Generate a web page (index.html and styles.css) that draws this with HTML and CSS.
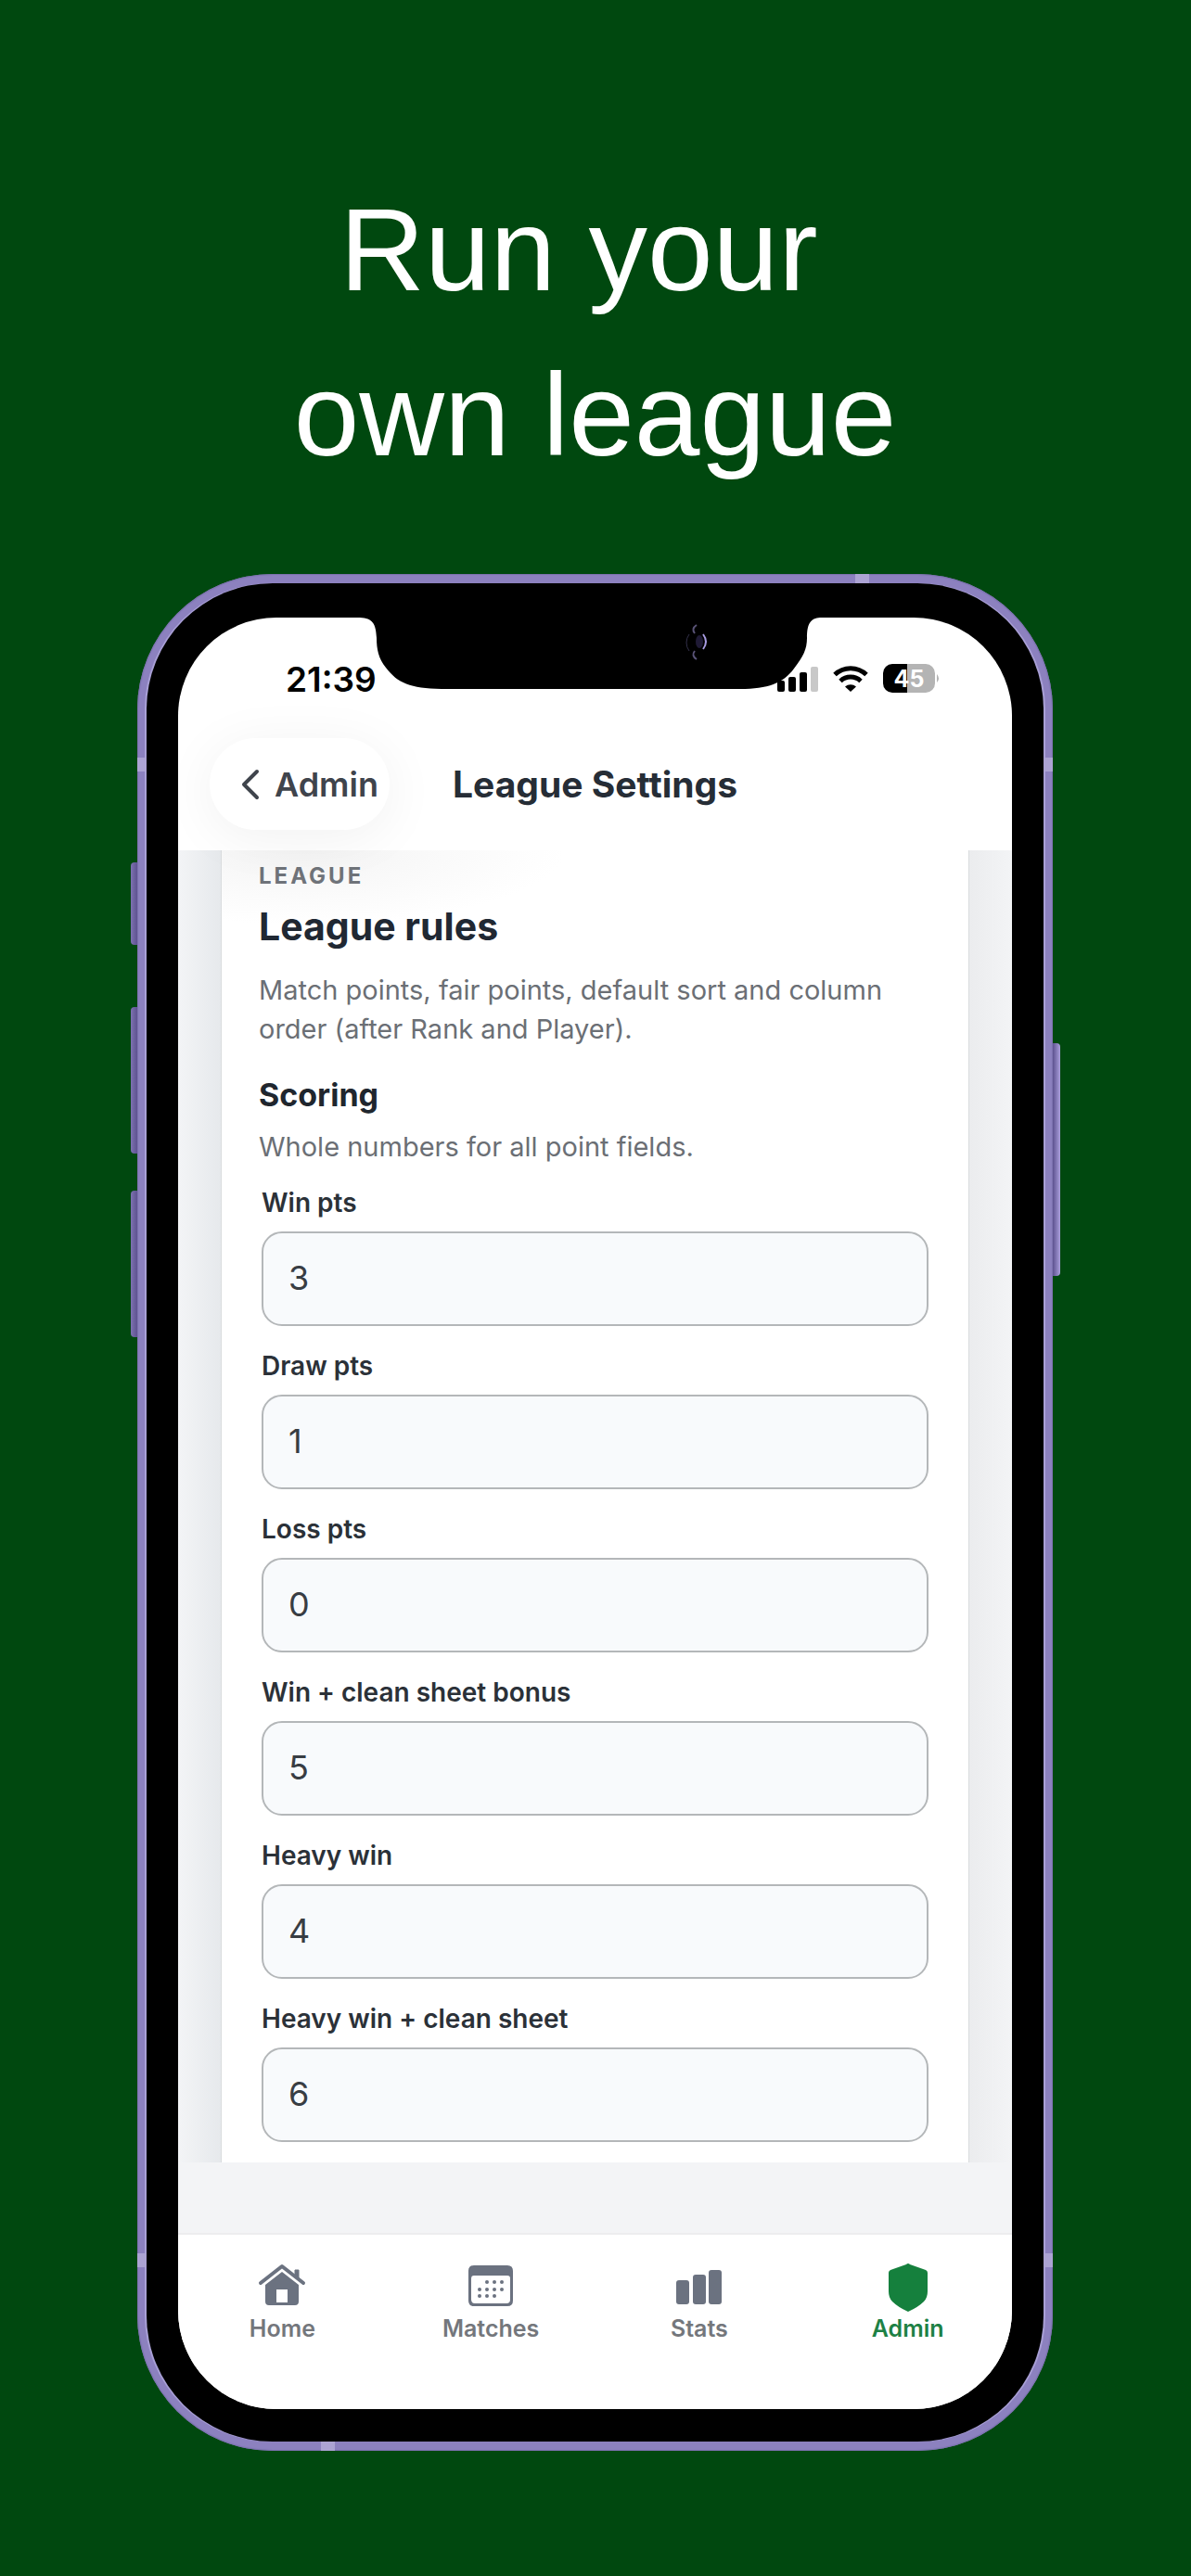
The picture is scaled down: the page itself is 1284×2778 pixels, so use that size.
FILE: index.html
```html
<!DOCTYPE html>
<html lang="en">
<head>
    <meta charset="UTF-8">
    <meta name="viewport" content="width=device-width, initial-scale=1.0">
    <title>Run your own league</title>
    <link rel="stylesheet" href="styles.css">
</head>
<body>
    <h1 class="headline">Run your&nbsp;<br>own league</h1>

    <div class="phone">
        <span class="side-button mute"></span>
        <span class="side-button volume-up"></span>
        <span class="side-button volume-down"></span>
        <span class="side-button power"></span>
        <span class="band band-top"></span>
        <span class="band band-bottom"></span>
        <span class="band band-left upper"></span>
        <span class="band band-left lower"></span>
        <span class="band band-right upper"></span>
        <span class="band band-right lower"></span>

        <div class="bezel">
            <div class="screen">
                <div class="status-bar">
                    <span class="time">21:39</span>
                    <div class="status-icons">
                        <svg width="44" height="28" viewBox="0 0 44 28">
                            <rect x="0" y="16" width="8" height="12" rx="2"/>
                            <rect x="12" y="12" width="8" height="16" rx="2"/>
                            <rect x="24" y="7" width="8" height="21" rx="2"/>
                            <rect x="36" y="1" width="8" height="27" rx="2" fill="#c8c8c8"/>
                        </svg>
                        <svg width="38" height="28" viewBox="0 0 38 28" fill="none" stroke="#000" stroke-width="5">
                            <path d="M2 9.500A24.500 24.500 0 0 1 36 9.500"/>
                            <path d="M8 16.500A16 16 0 0 1 30 16.500"/>
                            <path d="M13 22.500A9 9 0 0 1 25 22.500L19 28Z" fill="#000" stroke="none"/>
                        </svg>
                        <svg class="battery" width="62" height="32" viewBox="0 0 62 32">
                            <path d="M26 0H46A10 10 0 0 1 56 10V21A10 10 0 0 1 46 31H26Z" fill="#b4b4b4"/>
                            <path d="M26 0H10A10 10 0 0 0 0 10V21A10 10 0 0 0 10 31H26Z"/>
                            <path d="M58 11Q62 15.500 58 20Z" fill="#b4b4b4"/>
                            <text x="28" y="25" text-anchor="middle">45</text>
                        </svg>
                    </div>
                </div>

                <svg class="notch" width="496" height="77" viewBox="0 0 496 77">
                    <path d="M0 0C14 1 17 6 18 22C18 34 20 44 28 54C41 71 54 76 88 77H410C440 77 456 71 468 55C478 42 482 34 482 22C482 6 486 1 496 0Z"/>
                    <g fill="none">
                        <path d="M355 18A15 15 0 0 0 355 36" stroke="#33304a" stroke-width="1"/>
                        <path d="M363 8Q357 12 361 17M363 45Q357 41 361 36" stroke="#5a5478" stroke-width="2"/>
                        <ellipse cx="366" cy="26" rx="4" ry="7" fill="#1f1a35"/>
                        <path d="M370 18Q376 26 370 34" stroke="#a79be0" stroke-width="2"/>
                    </g>
                </svg>

                <header class="nav-bar">
                    <button class="back" type="button">
                        <svg width="20" height="34" viewBox="0 0 20 34" fill="none" stroke="#3f444c" stroke-width="4" stroke-linecap="round" stroke-linejoin="round">
                            <path d="M17 3L3 17L17 31"/>
                        </svg>
                        Admin
                    </button>
                    <h2 class="nav-title">League Settings</h2>
                </header>

                <main class="scroll-area">
                    <section class="card">
                        <p class="eyebrow">LEAGUE</p>
                        <h3 class="card-title">League rules</h3>
                        <p class="text">Match points, fair points, default sort and column order (after Rank and Player).</p>
                        <h4 class="section-title">Scoring</h4>
                        <p class="text">Whole numbers for all point fields.</p>
                        <form class="fields">
                            <div class="field">
                                <label for="win">Win pts</label>
                                <input type="text" inputmode="numeric" id="win" value="3">
                            </div>
                            <div class="field">
                                <label for="draw">Draw pts</label>
                                <input type="text" inputmode="numeric" id="draw" value="1">
                            </div>
                            <div class="field">
                                <label for="loss">Loss pts</label>
                                <input type="text" inputmode="numeric" id="loss" value="0">
                            </div>
                            <div class="field">
                                <label for="clean-sheet">Win + clean sheet bonus</label>
                                <input type="text" inputmode="numeric" id="clean-sheet" value="5">
                            </div>
                            <div class="field">
                                <label for="heavy-win">Heavy win</label>
                                <input type="text" inputmode="numeric" id="heavy-win" value="4">
                            </div>
                            <div class="field">
                                <label for="heavy-clean">Heavy win + clean sheet</label>
                                <input type="text" inputmode="numeric" id="heavy-clean" value="6">
                            </div>
                        </form>
                    </section>
                </main>

                <nav class="tab-bar">
                    <a class="tab" href="#home">
                        <svg width="52" height="52" viewBox="0 0 52 52">
                            <path d="M3 20L26 2L49 20" fill="none" stroke="currentColor" stroke-width="4" stroke-linecap="round" stroke-linejoin="round"/>
                            <path d="M40 6H44V16L40 13Z" stroke="currentColor" stroke-linejoin="round"/>
                            <path fill-rule="evenodd" d="M26 8L44 22V40Q44 44 40 44H12Q8 44 8 40V22ZM20 27V41H32V27Z"/>
                        </svg>
                        Home
                    </a>
                    <a class="tab" href="#matches">
                        <svg width="52" height="52" viewBox="0 0 52 52">
                            <path fill-rule="evenodd" d="M8 1H44Q50 1 50 7V39Q50 45 44 45H8Q2 45 2 39V7Q2 1 8 1ZM8 12Q5 12 5 15V38Q5 42 9 42H43Q47 42 47 38V15Q47 12 44 12Z"/>
                            <g>
                                <circle cx="22" cy="19" r="2"/><circle cx="30" cy="19" r="2"/><circle cx="38" cy="19" r="2"/>
                                <circle cx="14" cy="27" r="2"/><circle cx="22" cy="27" r="2"/><circle cx="30" cy="27" r="2"/><circle cx="38" cy="27" r="2"/>
                                <circle cx="14" cy="34" r="2"/><circle cx="22" cy="34" r="2"/><circle cx="30" cy="34" r="2"/>
                            </g>
                        </svg>
                        Matches
                    </a>
                    <a class="tab" href="#stats">
                        <svg width="52" height="52" viewBox="0 0 52 52">
                            <rect x="1" y="17" width="14" height="26" rx="3"/>
                            <rect x="19" y="11" width="14" height="32" rx="3"/>
                            <rect x="36" y="6" width="14" height="37" rx="3"/>
                        </svg>
                        Stats
                    </a>
                    <a class="tab active" href="#admin">
                        <svg width="52" height="52" viewBox="0 0 52 52">
                            <path d="M26 -1Q27 -1 28 0L45 6Q47 7 47 9V29Q47 36 43 40Q37 46 26 51Q15 46 9 40Q5 36 5 29V9Q5 7 7 6L24 0Q25 -1 26 -1Z"/>
                        </svg>
                        Admin
                    </a>
                </nav>
            </div>
        </div>
    </div>
</body>
</html>
```

FILE: styles.css
```css
* {
    box-sizing: border-box;
}

body {
    margin: 0;
    min-height: 100vh;
    padding: 180px 149px 135px 148px;
    background-color: #00480f;
    font-family: Inter, 'Liberation Sans', sans-serif;
}

h1, h2, h3, h4, p {
    margin: 0;
}

.headline {
    margin-bottom: 83px;
    color: #fff;
    font-family: 'Liberation Sans', Arial, sans-serif;
    font-size: 127px;
    font-weight: 400;
    line-height: 178px;
    text-align: center;
}

/* phone body */
.phone {
    position: relative;
    padding: 10px;
    border-radius: 146px;
    background-color: #8c81bf;
    box-shadow: inset 0 0 1px 1px #7a70ad;
}

.bezel {
    padding: 37px 34px 35px;
    border-radius: 136px;
    background-color: #000;
    box-shadow: -2px 0 0 #a9a0d6, 2px 0 0 #a9a0d6;
}

.screen {
    position: relative;
    overflow: hidden;
    border-radius: 106px;
    background-color: #fff;
}

.side-button {
    position: absolute;
    left: -7px;
    width: 7px;
    height: 158px;
    border-radius: 4px 0 0 4px;
    background: linear-gradient(to right, #7d72b0, #5d5290);
}

.mute {
    top: 311px;
    height: 89px;
}

.volume-up {
    top: 467px;
}

.volume-down {
    top: 665px;
}

.power {
    top: 506px;
    right: -8px;
    left: auto;
    width: 8px;
    height: 251px;
    border-radius: 0 4px 4px 0;
    background: linear-gradient(to right, #5d5290, #aba0dc);
}

.band {
    position: absolute;
    width: 10px;
    height: 15px;
    background-color: #aca3d3;
}

.band-top {
    top: 0;
    right: 198px;
    width: 15px;
    height: 10px;
}

.band-bottom {
    bottom: 0;
    left: 198px;
    width: 15px;
    height: 10px;
}

.band-left {
    left: 0;
}

.band-right {
    right: 0;
}

.upper {
    top: 198px;
}

.lower {
    bottom: 198px;
}

/* status bar */
.status-bar {
    display: flex;
    justify-content: space-between;
    align-items: center;
    height: 130px;
    padding: 2px 77px 0 116px;
}

.time {
    color: #000;
    font-size: 37px;
    font-weight: 600;
}

.status-icons {
    display: flex;
    align-items: center;
    gap: 16px;
}

.battery text {
    fill: #fff;
    font-size: 25px;
    font-weight: 700;
}

.notch {
    position: absolute;
    top: 0;
    left: 196px;
}

/* navigation header */
.nav-bar {
    position: relative;
    display: grid;
    grid-template-columns: 1fr auto 1fr;
    align-items: center;
    padding: 0 34px 22px;
}

.back {
    display: flex;
    align-items: center;
    justify-self: start;
    gap: 16px;
    height: 99px;
    padding: 0 12px 0 34px;
    border: 0;
    border-radius: 50px;
    background-color: #fff;
    box-shadow: 0 8px 60px rgba(0, 0, 0, 0.06);
    color: #3f444c;
    font-family: inherit;
    font-size: 36px;
    font-weight: 600;
    cursor: pointer;
}

.nav-title {
    color: #262d36;
    font-size: 39px;
    font-weight: 700;
}

/* settings card */
.scroll-area {
    padding: 0 46px;
    border-bottom: 76px solid #f3f4f6;
    background: linear-gradient(to right, #f3f4f6, #e6e9ec 46px, #ebecee calc(100% - 46px), #f3f4f6);
}

.card {
    padding: 13px 40px 22px;
    border: solid #d9dcde;
    border-width: 0 1px;
    background: radial-gradient(ellipse 280px 80px at 90px 0, #f4f4f4, #fff);
}

.eyebrow {
    color: #6f7379;
    font-size: 24px;
    font-weight: 700;
    letter-spacing: 3px;
    line-height: 30px;
}

.card-title {
    margin: 14px 0 23px;
    color: #202833;
    font-size: 41px;
    font-weight: 700;
    line-height: 50px;
}

.text {
    color: #6b6f75;
    font-size: 29px;
    line-height: 42px;
}

.section-title {
    margin: 29px 0 14px;
    color: #20262e;
    font-size: 34px;
    font-weight: 700;
    line-height: 42px;
}

.fields {
    display: flex;
    flex-direction: column;
    gap: 26px;
    margin-top: 22px;
    padding: 0 3px;
}

.field {
    display: flex;
    flex-direction: column;
    gap: 14px;
}

.field label {
    color: #2b3138;
    font-size: 28px;
    font-weight: 600;
    line-height: 34px;
}

.field input {
    width: 100%;
    height: 102px;
    padding: 0 27px 2px;
    border: 2px solid #b4b7b9;
    border-radius: 22px;
    background-color: #f8fafc;
    color: #383d43;
    font-family: inherit;
    font-size: 36px;
}

/* bottom tabs */
.tab-bar {
    display: grid;
    grid-template-columns: repeat(4, 1fr);
    height: 190px;
    padding-top: 32px;
    border-top: 2px solid #ededef;
    background-color: #fff;
}

.tab {
    display: flex;
    flex-direction: column;
    align-items: center;
    gap: 2px;
    color: #74777c;
    font-size: 25px;
    font-weight: 600;
    line-height: 30px;
    text-decoration: none;
}

.tab svg {
    overflow: visible;
    color: #6b7280;
    fill: #6b7280;
}

.active {
    color: #1d8145;
}

.active svg {
    fill: #15803d;
}
```
